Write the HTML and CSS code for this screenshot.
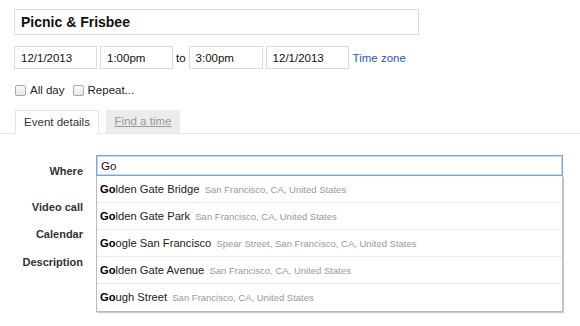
FILE: index.html
```html
<!DOCTYPE html>
<html>
<head>
<meta charset="utf-8">
<link rel="stylesheet" href="styles.css">
</head>
<body>
<div class="page">
  <div class="title-box">Picnic &amp; Frisbee</div>
  <div class="dates">
    <div class="field w83">12/1/2013</div>
    <div class="field w73">1:00pm</div>
    <span class="to">to</span>
    <div class="field w74">3:00pm</div>
    <div class="field w83">12/1/2013</div>
    <a class="tz">Time zone</a>
  </div>
  <div class="checks">
    <span class="cb"></span><span class="cb-label">All day</span>
    <span class="cb"></span><span class="cb-label">Repeat...</span>
  </div>
  <div class="tabs">
    <div class="tab active">Event details</div>
    <div class="tab inactive"><span>Find a time</span></div>
  </div>
  <div class="form">
    <div class="label where">Where</div>
    <div class="where-cell">
      <div class="where-input">Go</div>
      <ul class="suggest">
        <li><b>Go</b>lden Gate Bridge <span class="sub">San Francisco, CA, United States</span></li>
        <li><b>Go</b>lden Gate Park <span class="sub">San Francisco, CA, United States</span></li>
        <li><b>Go</b>ogle San Francisco <span class="sub">Spear Street, San Francisco, CA, United States</span></li>
        <li><b>Go</b>lden Gate Avenue <span class="sub">San Francisco, CA, United States</span></li>
        <li><b>Go</b>ugh Street <span class="sub">San Francisco, CA, United States</span></li>
      </ul>
    </div>
    <div class="label">Video call</div><div></div>
    <div class="label">Calendar</div><div></div>
    <div class="label">Description</div><div></div>
  </div>
</div>
</body>
</html>
```

FILE: styles.css
```css
html, body {
  margin: 0;
  padding: 0;
  background: #fff;
}
body {
  font-family: "Liberation Sans", Arial, sans-serif;
  color: #222;
  width: 580px;
  height: 326px;
  overflow: hidden;
}
.page {
  padding-top: 9px;
}
.title-box {
  margin-left: 14px;
  height: 24px;
  border: 1px solid #dcdcdc;
  font-size: 14px;
  font-weight: bold;
  line-height: 25px;
  padding-left: 6px;
  width: 397px;
  color: #111;
}
.dates {
  display: flex;
  align-items: center;
  margin: 11px 0 0 14px;
  height: 23px;
}
.field {
  height: 21px;
  border: 1px solid #dcdcdc;
  font-size: 11.5px;
  line-height: 22px;
  padding-left: 6px;
  box-sizing: content-box;
  margin-right: 3px;
  color: #111;
}
.w83 { width: 75px; }
.w73 { width: 65px; }
.w74 { width: 66px; }
.to {
  font-size: 11.5px;
  margin: 0 3px 0 0;
  color: #111;
}
.tz {
  font-size: 11.5px;
  color: #2a5db0;
  margin-left: 1px;
}
.checks {
  display: flex;
  align-items: center;
  margin: 15px 0 0 15px;
  height: 12px;
  font-size: 11.5px;
  color: #222;
}
.cb {
  width: 9px;
  height: 9px;
  border: 1px solid #aaa;
  border-radius: 2px;
  background: linear-gradient(#fcfcfc, #e6e6e6);
  margin-right: 4px;
}
.cb-label {
  margin-right: 8px;
}
.tabs {
  display: flex;
  margin-top: 14px;
  padding-left: 15px;
  border-bottom: 1px solid #e5e5e5;
  height: 23px;
}
.tab {
  box-sizing: border-box;
  font-size: 11.5px;
  line-height: 23px;
}
.tab.active {
  width: 84px;
  border: 1px solid #e5e5e5;
  border-bottom: none;
  background: #fff;
  text-align: center;
  color: #333;
  margin-bottom: -1px;
  height: 24px;
}
.tab.inactive {
  width: 74px;
  height: 23px;
  margin-left: 7px;
  background: #ececec;
  text-align: center;
  color: #999;
}
.tab.inactive span {
  text-decoration: underline;
}
.form {
  display: grid;
  grid-template-columns: 83px 467px;
  column-gap: 13px;
  grid-template-rows: 37px 27px 28px 27px;
  margin-top: 21px;
}
.label {
  text-align: right;
  font-size: 11px;
  font-weight: bold;
  color: #333;
  line-height: 14px;
}
.label.where {
  padding-top: 9px;
}
.form .label:nth-of-type(n+2) {
  padding-top: 8px;
}
.where-cell {
  position: relative;
}
.where-input {
  height: 19px;
  border: 1px solid #7da2e8;
  box-shadow: inset 0 0 0 1px #c3d4f5;
  font-size: 11.5px;
  line-height: 20px;
  padding-left: 4px;
  width: 461px;
  color: #111;
}
.suggest {
  position: absolute;
  top: 21px;
  left: 0;
  width: 465px;
  margin: 0;
  padding: 0;
  list-style: none;
  background: #fff;
  border: 1px solid #bbb;
  border-top: none;
  box-shadow: 1px 1px 1px rgba(0,0,0,0.2);
  z-index: 2;
}
.suggest li {
  height: 27px;
  line-height: 26px;
  font-size: 11.2px;
  color: #222;
  padding-left: 3px;
  border-bottom: 1px solid #ececec;
  box-sizing: border-box;
  white-space: nowrap;
}
.suggest li:last-child {
  border-bottom: none;
}
.suggest b {
  font-weight: bold;
  color: #000;
}
.sub {
  font-size: 9.5px;
  color: #999;
  margin-left: 2px;
}
```
